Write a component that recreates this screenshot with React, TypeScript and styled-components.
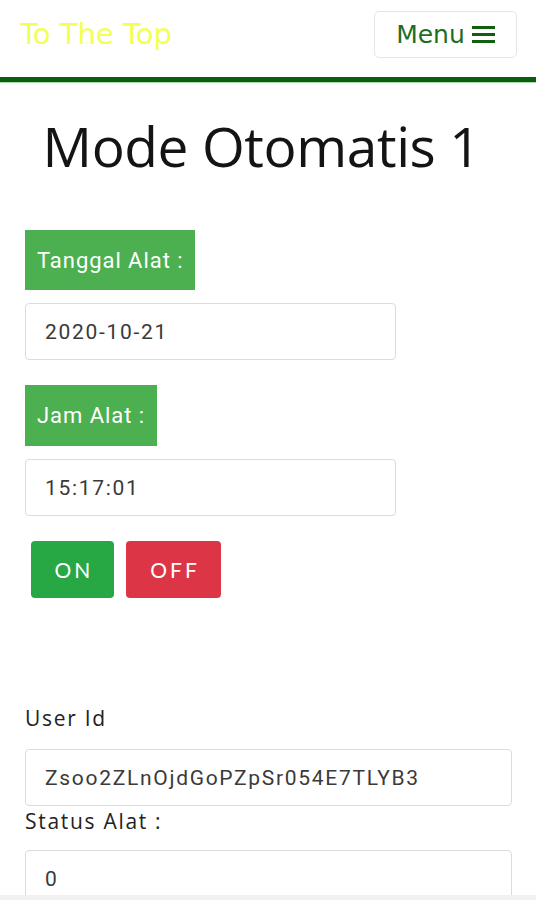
import React from "react";
import styled, { createGlobalStyle } from "styled-components";

const Global = createGlobalStyle`
  html, body { margin: 0; padding: 0; background: #ffffff; }
  * { box-sizing: border-box; }
`;

const Page = styled.div`
  width: 536px;
  min-height: 900px;
  background: #fff;
`;

const NavBar = styled.header`
  height: 82px;
  display: flex;
  align-items: center;
  justify-content: space-between;
  padding: 0 19px 9px 20px;
  border-bottom: 5px solid #0b5c0b;
  box-shadow: 0 1px 0 #a9dca9;
`;

const Brand = styled.a`
  font-family: "DejaVu Sans", Verdana, sans-serif;
  font-size: 29px;
  color: #f2ff55;
  text-decoration: none;
  line-height: 1;
`;

const MenuButton = styled.button`
  height: 47px;
  width: 143px;
  display: flex;
  align-items: center;
  justify-content: center;
  gap: 7px;
  background: #fff;
  border: 1px solid #e6e6e6;
  border-radius: 5px;
  font-family: "DejaVu Sans", Verdana, sans-serif;
  font-size: 25px;
  color: #1f6e1f;
  padding: 0 0 0 0;
`;

const Main = styled.main`
  padding: 0 24px 0 25px;
`;

const Title = styled.h1`
  margin: 24px 0 0;
  text-align: center;
  font-family: "Open Sans", sans-serif;
  font-weight: 400;
  font-size: 55px;
  letter-spacing: -0.4px;
  line-height: 80px;
  color: #141414;
  padding-right: 14px;
`;

const Badge = styled.div<{ $top: number; $h: number }>`
  display: inline-flex;
  align-items: center;
  height: ${(p) => p.$h}px;
  padding: 0 12px;
  margin-top: ${(p) => p.$top}px;
  background: #4caf50;
  color: #fff;
  font-family: Roboto, "Liberation Sans", sans-serif;
  font-size: 22px;
  letter-spacing: 0.95px;
`;

const Field = styled.div<{ $w: number; $top: number }>`
  width: ${(p) => p.$w}px;
  height: 57px;
  margin-top: ${(p) => p.$top}px;
  display: flex;
  align-items: center;
  padding: 0 19px;
  border: 1px solid #dcdcdc;
  border-radius: 4px;
  font-family: Roboto, "Liberation Sans", sans-serif;
  font-size: 21px;
  letter-spacing: 1.7px;
  color: #3a3a3a;
  background: #fff;
`;

const ButtonRow = styled.div`
  display: flex;
  gap: 12px;
  margin: 25px 0 0 6px;
`;

const ToggleButton = styled.button<{ $bg: string; $w: number }>`
  width: ${(p) => p.$w}px;
  height: 57px;
  border: none;
  border-radius: 4px;
  background: ${(p) => p.$bg};
  color: #fff;
  font-family: Lato, "Open Sans", sans-serif;
  font-size: 21px;
  letter-spacing: 3px;
  padding: 0 0 0 3px;
`;

const PlainLabel = styled.div<{ $top: number }>`
  margin-top: ${(p) => p.$top}px;
  font-family: "Open Sans", sans-serif;
  font-size: 21px;
  letter-spacing: 1.7px;
  color: #222;
  line-height: 24px;
`;

const BottomEdge = styled.div`
  position: fixed;
  left: 0;
  right: 0;
  bottom: 0;
  height: 5px;
  background: #f1f1f1;
`;

function HamburgerIcon() {
  return (
    <svg width="23" height="17" viewBox="0 0 23 17" aria-hidden="true">
      <rect x="0" y="0" width="23" height="3" fill="#125f12" />
      <rect x="0" y="7" width="23" height="3" fill="#125f12" />
      <rect x="0" y="14" width="23" height="3" fill="#125f12" />
    </svg>
  );
}

export default function App() {
  return (
    <Page>
      <Global />
      <NavBar>
        <Brand href="#">To The Top</Brand>
        <MenuButton>
          Menu
          <HamburgerIcon />
        </MenuButton>
      </NavBar>
      <Main>
        <Title>Mode Otomatis 1</Title>
        <Badge $top={44} $h={60}>Tanggal Alat :</Badge>
        <Field $w={371} $top={13}>2020-10-21</Field>
        <Badge $top={25} $h={61}>Jam Alat :</Badge>
        <Field $w={371} $top={13}>15:17:01</Field>
        <ButtonRow>
          <ToggleButton $bg="#28a745" $w={83}>ON</ToggleButton>
          <ToggleButton $bg="#dc3545" $w={95}>OFF</ToggleButton>
        </ButtonRow>
        <PlainLabel $top={108}>User Id</PlainLabel>
        <Field $w={487} $top={19}>Zsoo2ZLnOjdGoPZpSr054E7TLYB3</Field>
        <PlainLabel $top={3}>Status Alat :</PlainLabel>
        <Field $w={487} $top={17}>0</Field>
      </Main>
      <BottomEdge />
    </Page>
  );
}
